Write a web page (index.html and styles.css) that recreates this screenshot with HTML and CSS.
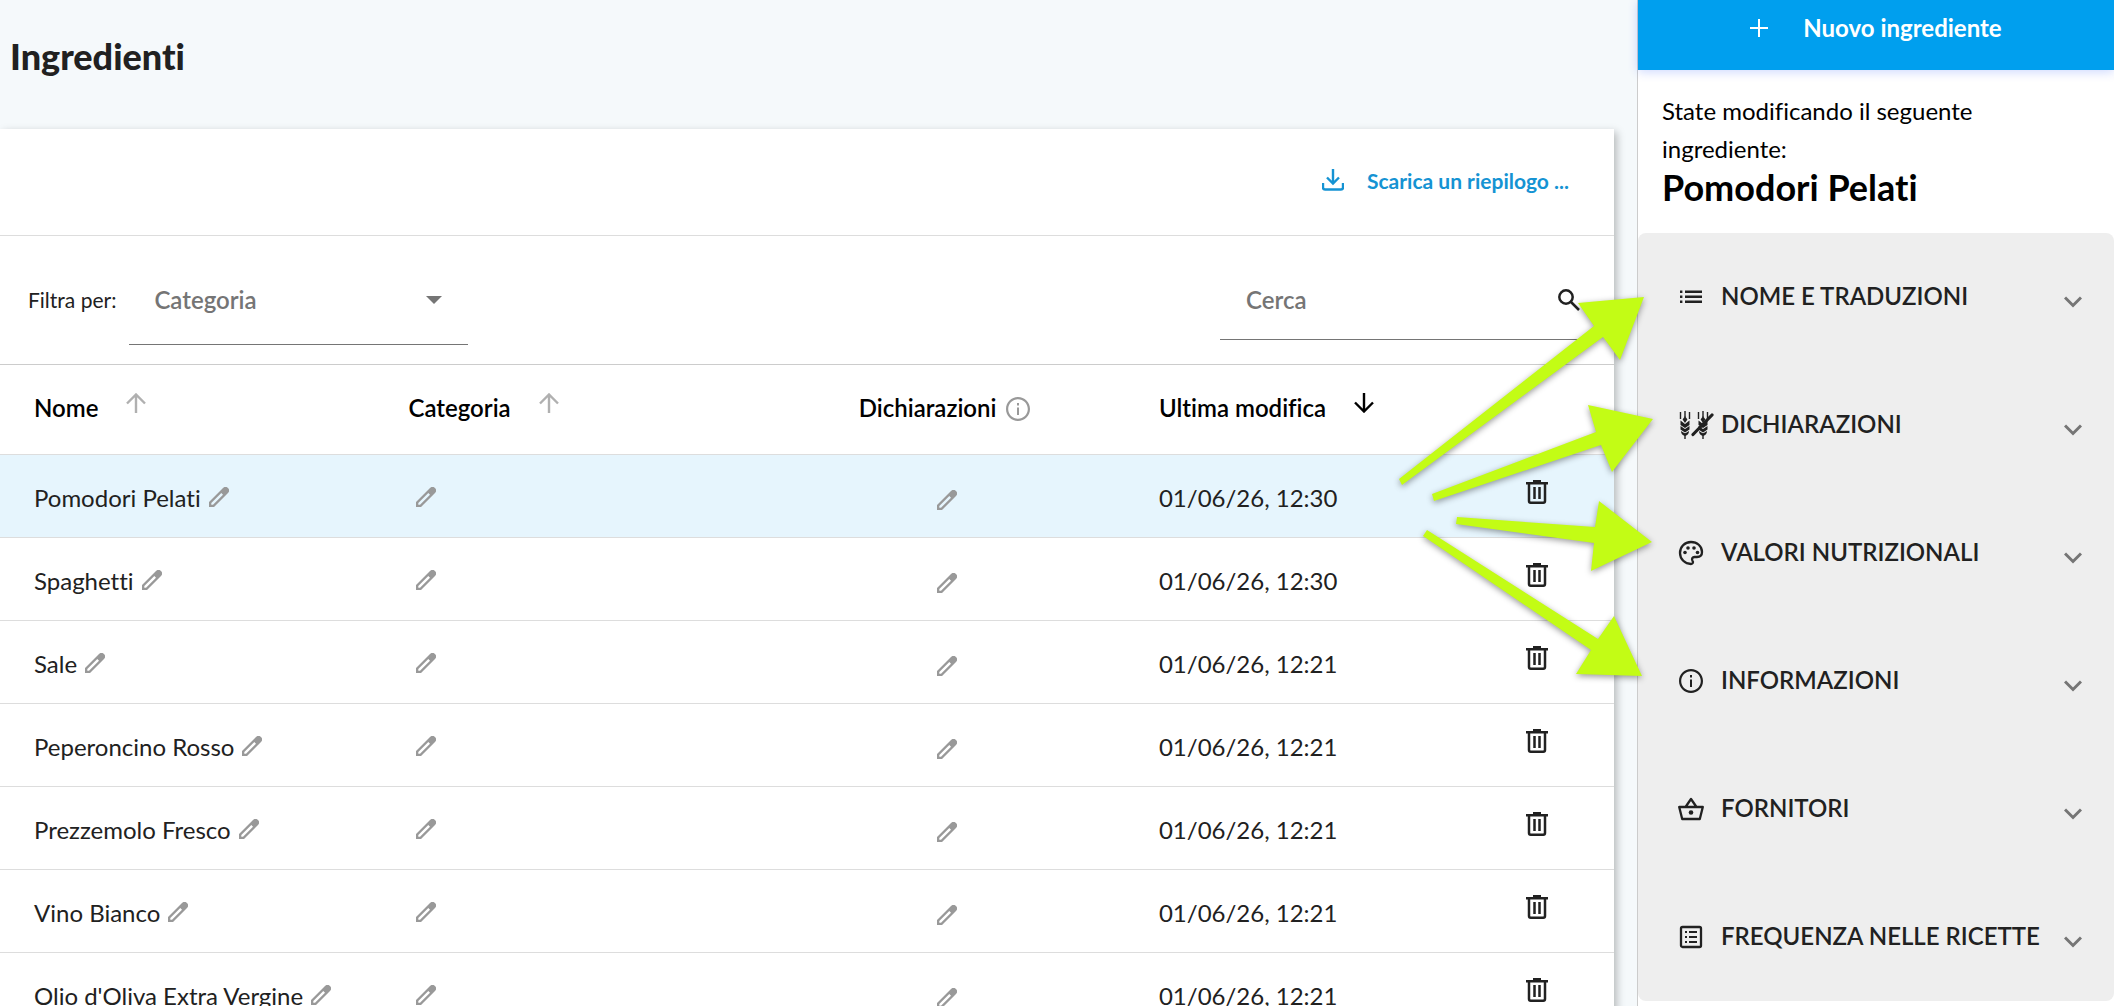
FILE: index.html
```html
<!DOCTYPE html>
<html lang="it">
<head>
    <meta charset="UTF-8">
    <meta name="viewport" content="width=device-width, initial-scale=1.0">
    <title>Ingredienti</title>
    <link rel="stylesheet" href="styles.css">
</head>
<body>
    <!-- icone condivise -->
    <svg class="sprite" aria-hidden="true">
        <symbol id="pencil" viewBox="0 0 20 20">
            <path fill-rule="evenodd" d="M0 20v-5L14 1a3.500 3.500 0 0 1 5 5L5 20zM2.300 17.700h1.700L14 7.700l-1.700-1.700L2.300 16z"/>
        </symbol>
        <symbol id="trash" viewBox="0 0 22 24">
            <path d="M0 3.200h22M7 1.200h8M3 3.200v17.800q0 1.700 1.700 1.700h12.600q1.700 0 1.700-1.700V3.200M8.500 7v12M13.500 7v12" fill="none" stroke="currentColor" stroke-width="2.500"/>
        </symbol>
        <symbol id="arrow-up" viewBox="0 0 20 20">
            <path d="M10 20V2M1 10.500l9-9 9 9" fill="none" stroke="currentColor" stroke-width="2.400"/>
        </symbol>
        <symbol id="arrow-down" viewBox="0 0 20 20">
            <path d="M10 0v18M1 9.500l9 9 9-9" fill="none" stroke="currentColor" stroke-width="2.400"/>
        </symbol>
        <symbol id="info" viewBox="0 0 24 24">
            <path d="M11 6h2v2.400h-2zm0 4.500h2V18h-2zm1-10.500C5.400 0 0 5.400 0 12s5.400 12 12 12 12-5.400 12-12S18.600 0 12 0zm0 21.800C6.600 21.800 2.200 17.400 2.200 12S6.600 2.200 12 2.200s9.800 4.400 9.800 9.800-4.400 9.800-9.800 9.800z"/>
        </symbol>
        <symbol id="chevron" viewBox="0 0 18 12">
            <path d="M1 1.500l8 8 8-8" fill="none" stroke="currentColor" stroke-width="3"/>
        </symbol>
    </svg>

    <div class="page">
        <main class="main">
            <h1>Ingredienti</h1>

            <section class="card">
                <div class="toolbar">
                    <button class="download-button">
                        <svg width="22" height="22" viewBox="0 0 22 22"><path d="M11 0v14M5 8.500l6 6 6-6M1 14v4.500q0 2 2 2h16q2 0 2-2V14" fill="none" stroke="currentColor" stroke-width="2.400"/></svg>
                        Scarica un riepilogo ...
                    </button>
                </div>

                <div class="filters">
                    <label for="categoria">Filtra per:</label>
                    <div class="select-box">
                        <select id="categoria">
                            <option>Categoria</option>
                        </select>
                        <svg width="16" height="8" viewBox="0 0 16 8"><path d="M0 0h16l-8 8z"/></svg>
                    </div>
                    <div class="search-box">
                        <input type="text" placeholder="Cerca" aria-label="Cerca">
                        <svg width="22" height="22" viewBox="0 0 22 22"><circle cx="8" cy="8" r="6.700"/><path d="M13 13l8 8"/></svg>
                    </div>
                </div>

                <table class="ingredients">
                    <colgroup>
                        <col class="col-name">
                        <col class="col-category">
                        <col class="col-declarations">
                        <col class="col-date">
                        <col class="col-delete">
                    </colgroup>
                    <thead>
                        <tr>
                            <th>Nome <svg class="sort"><use href="#arrow-up"/></svg></th>
                            <th>Categoria <svg class="sort"><use href="#arrow-up"/></svg></th>
                            <th>Dichiarazioni <svg class="info"><use href="#info"/></svg></th>
                            <th>Ultima modifica <svg class="sort active"><use href="#arrow-down"/></svg></th>
                            <th></th>
                        </tr>
                    </thead>
                    <tbody id="rows"></tbody>
                </table>
            </section>
        </main>

        <aside class="sidebar">
            <button class="new-button">
                <svg width="18" height="18" viewBox="0 0 18 18"><path d="M9 0v18M0 9h18" stroke="currentColor" stroke-width="2"/></svg>
                Nuovo ingrediente
            </button>
            <div class="editing">
                <p>State modificando il seguente ingrediente:</p>
                <h2>Pomodori Pelati</h2>
            </div>
            <div class="sections">
                <button class="section">
                    <svg class="icon" viewBox="0 0 26 28"><path d="M2 7.500h2.400v2.400H2zm0 5h2.400v2.400H2zm0 5h2.400v2.400H2zM7 7.500h17v2.400H7zm0 5h17v2.400H7zm0 5h17v2.400H7z"/></svg>
                    <span>NOME E TRADUZIONI</span>
                    <svg class="chevron"><use href="#chevron"/></svg>
                </button>
                <button class="section">
                    <svg class="icon wide" viewBox="0 0 36 28">
                        <g id="wheat">
                            <path d="M2.500 1v7M7 0v6M11.500 1v7M7 22v6" stroke="currentColor" stroke-width="1.400"/>
                            <path d="M7 5l2.400 3.500L7 12 4.600 8.500zM2.500 9.500L7 13l4.500-3.500V14L7 17l-4.500-3zM2.500 15L7 18l4.500-3v3.500L7 21.500l-4.500-3zM3 20l4 2.500L11 20q0 4-4 5-4-1-4-5z"/>
                        </g>
                        <use href="#wheat" x="18"/>
                        <path d="M15 23.500L34 4" stroke="currentColor" stroke-width="3.200" stroke-linecap="round"/>
                    </svg>
                    <span>DICHIARAZIONI</span>
                    <svg class="chevron"><use href="#chevron"/></svg>
                </button>
                <button class="section">
                    <svg class="icon" viewBox="0 0 26 28">
                        <path d="M13 3C6.500 3 2 8 2 14s5 11 11 11c2 0 2.500-1.800 1.500-3.200-1.200-2 0-3.800 2-3.800H19c3 0 5-2 5-5 0-6-5-10-11-10z" fill="none" stroke="currentColor" stroke-width="2.300"/>
                        <circle cx="7" cy="13.500" r="1.800"/><circle cx="10" cy="9" r="1.800"/><circle cx="16" cy="9" r="1.800"/><circle cx="19.500" cy="13.500" r="1.800"/>
                    </svg>
                    <span>VALORI NUTRIZIONALI</span>
                    <svg class="chevron"><use href="#chevron"/></svg>
                </button>
                <button class="section">
                    <svg class="icon" viewBox="-1 -2 26 28"><use href="#info" width="24" height="24"/></svg>
                    <span>INFORMAZIONI</span>
                    <svg class="chevron"><use href="#chevron"/></svg>
                </button>
                <button class="section">
                    <svg class="icon" viewBox="0 0 26 28">
                        <path d="M1.200 12h23.600l-3 12H4.200zM7.500 12L13 4l5.500 8" fill="none" stroke="currentColor" stroke-width="2.300" stroke-linejoin="round"/>
                        <circle cx="13" cy="17.500" r="2.300"/>
                    </svg>
                    <span>FORNITORI</span>
                    <svg class="chevron"><use href="#chevron"/></svg>
                </button>
                <button class="section">
                    <svg class="icon" viewBox="0 0 26 28">
                        <rect x="3" y="4" width="20" height="20" rx="1.500" fill="none" stroke="currentColor" stroke-width="2.300"/>
                        <path d="M7 8h2v2H7zm0 5h2v2H7zm0 5h2v2H7zM11 8h8v2h-8zm0 5h8v2h-8zm0 5h8v2h-8z"/>
                    </svg>
                    <span>FREQUENZA NELLE RICETTE</span>
                    <svg class="chevron"><use href="#chevron"/></svg>
                </button>
            </div>
        </aside>

        <!-- frecce dal rigo selezionato alle sezioni del pannello -->
        <svg class="arrows" viewBox="1394 290 270 400" aria-hidden="true">
            <path d="M1399 479L1594 326L1578 303L1644 297L1620 360L1603 337L1402 485z"/>
            <path d="M1432 494L1596 432L1588 405L1653 419L1612 472L1601 445L1434 501z"/>
            <path d="M1457 517L1595 527L1599 501L1652 542L1591 571L1594 543L1456 524z"/>
            <path d="M1427 530L1598 639L1614 616L1642 676L1576 674L1591 650L1423 536z"/>
        </svg>
    </div>

    <script>
        const ingredienti = [
            ['Pomodori Pelati', '01/06/26, 12:30'],
            ['Spaghetti', '01/06/26, 12:30'],
            ['Sale', '01/06/26, 12:21'],
            ['Peperoncino Rosso', '01/06/26, 12:21'],
            ['Prezzemolo Fresco', '01/06/26, 12:21'],
            ['Vino Bianco', '01/06/26, 12:21'],
            ["Olio d'Oliva Extra Vergine", '01/06/26, 12:21']
        ];

        const matita = '<button class="edit" aria-label="Modifica"><svg><use href="#pencil"/></svg></button>';

        document.getElementById('rows').innerHTML = ingredienti.map(([nome, data], i) => `
            <tr class="${i === 0 ? 'selected' : ''}">
                <td>${nome}${matita}</td>
                <td>${matita}</td>
                <td class="declarations">${matita}</td>
                <td>${data}</td>
                <td class="actions"><button class="delete" aria-label="Elimina"><svg><use href="#trash"/></svg></button></td>
            </tr>`).join('');
    </script>
</body>
</html>
```
FILE: styles.css
```css
* {
    box-sizing: border-box;
}

body {
    margin: 0;
    font-family: Lato, "Open Sans", sans-serif;
    font-size: 24px;
    font-variant-ligatures: none;
    color: #212121;
    background-color: #f5f9fb;
    overflow: hidden;
}

button,
select,
input {
    font: inherit;
    font-variant-ligatures: none;
    color: inherit;
    background: none;
    border: none;
    padding: 0;
}

button {
    cursor: pointer;
}

svg {
    fill: currentColor;
    flex-shrink: 0;
}

.sprite {
    display: none;
}

.page {
    position: relative;
    display: flex;
    height: 100vh;
}

.main {
    flex: 1;
    padding-right: 23px;
}

h1 {
    margin: 0;
    padding: 36px 10px 53px;
    font-size: 36px;
    font-weight: 900;
    line-height: 40px;
}

.card {
    background-color: white;
    box-shadow: 3px 3px 8px rgba(0, 0, 0, 0.25);
}

.toolbar {
    display: flex;
    justify-content: flex-end;
    height: 107px;
    padding: 0 45px 4px 0;
    border-bottom: 1px solid #ddd;
}

.download-button {
    display: flex;
    align-items: center;
    gap: 23px;
    font-size: 21px;
    font-weight: bold;
    color: #1593d3;
}

.filters {
    display: flex;
    align-items: center;
    height: 129px;
    padding: 0 34px 0 28px;
    border-bottom: 1px solid #ccc;
}

.filters label {
    font-size: 21px;
    margin-right: 13px;
    padding-bottom: 2px;
}

.select-box,
.search-box {
    display: flex;
    align-items: center;
    height: 90px;
    border-bottom: 1px solid #757575;
    color: #757575;
    font-weight: 600;
}

.select-box {
    width: 339px;
    padding: 0 26px 0 25px;
}

.select-box select {
    flex: 1;
    appearance: none;
}

.search-box {
    width: 360px;
    height: 80px;
    margin-left: auto;
    padding-left: 26px;
}

.search-box input {
    flex: 1;
    min-width: 0;
}

.search-box input::placeholder {
    color: #757575;
}

.search-box svg {
    fill: none;
    stroke: #212121;
    stroke-width: 2.5;
}

.ingredients {
    width: 100%;
    table-layout: fixed;
    border-collapse: collapse;
}

.col-name { width: 23.2%; }
.col-category { width: 27.9%; }
.col-declarations { width: 18.6%; }
.col-date { width: 22.8%; }
.col-delete { width: 7.5%; }

.ingredients th,
.ingredients td {
    padding: 0 0 0 34px;
    text-align: left;
    white-space: nowrap;
    border-bottom: 1px solid #ddd;
}

.ingredients th {
    height: 89px;
    padding-bottom: 3px;
    font-weight: 600;
    color: black;
}

.ingredients td {
    height: 83px;
    padding-top: 3px;
}

.sort {
    width: 20px;
    height: 20px;
    margin-left: 22px;
    vertical-align: 4px;
    color: #b0b0b0;
}

.sort.active {
    color: black;
}

.info {
    width: 24px;
    height: 24px;
    margin-left: 4px;
    vertical-align: -4px;
    color: #999;
}

.selected {
    background-color: #e6f5fd;
}

.edit {
    margin-left: 8px;
    color: #999;
}

.edit svg {
    display: block;
    width: 20px;
    height: 20px;
}

.ingredients .declarations {
    padding: 10px 0 0 104px;
}

.ingredients .actions {
    padding: 0 0 2px 33px;
}

.delete svg {
    display: block;
    width: 22px;
    height: 24px;
}

.sidebar {
    width: 477px;
    background-color: white;
    border-left: 1px solid #ccc;
}

.new-button {
    display: flex;
    align-items: center;
    justify-content: center;
    gap: 35px;
    width: 100%;
    height: 70px;
    padding-bottom: 15px;
    color: white;
    font-weight: bold;
    background-color: #009fee;
    box-shadow: 0 2px 10px rgba(0, 60, 255, 0.2);
}

.editing {
    padding: 22px 80px 26px 24px;
    color: black;
}

.editing p {
    margin: 0;
    line-height: 38px;
}

.editing h2 {
    margin: 0;
    font-size: 36px;
    line-height: 39px;
}

.sections {
    background-color: #eee;
    border-radius: 8px;
}

.section {
    display: flex;
    align-items: center;
    width: 100%;
    height: 128px;
    padding: 0 32px 0 40px;
    font-weight: 600;
}

.section span {
    flex: 1;
    padding-bottom: 4px;
    text-align: left;
    white-space: nowrap;
}

.icon {
    width: 26px;
    height: 28px;
    margin-right: 17px;
}

.icon.wide {
    width: 36px;
    margin-right: 7px;
}

.chevron {
    width: 18px;
    height: 12px;
    margin-top: 10px;
    color: #757575;
}

.arrows {
    position: absolute;
    top: 290px;
    right: 450px;
    width: 270px;
    height: 400px;
    fill: #c3fc15;
    filter: drop-shadow(0 2px 3px rgba(0, 0, 0, 0.4));
    pointer-events: none;
}
```
